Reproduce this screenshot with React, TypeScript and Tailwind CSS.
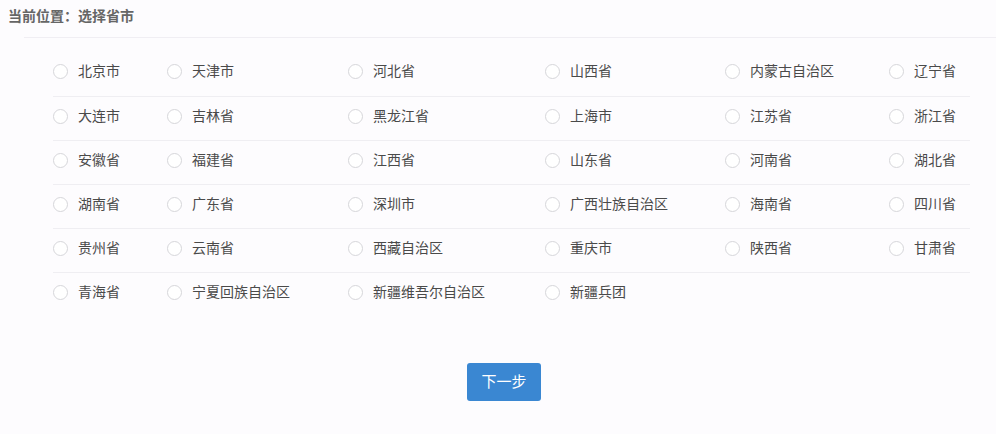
const ROWS: string[][] = [
  ['北京市', '天津市', '河北省', '山西省', '内蒙古自治区', '辽宁省'],
  ['大连市', '吉林省', '黑龙江省', '上海市', '江苏省', '浙江省'],
  ['安徽省', '福建省', '江西省', '山东省', '河南省', '湖北省'],
  ['湖南省', '广东省', '深圳市', '广西壮族自治区', '海南省', '四川省'],
  ['贵州省', '云南省', '西藏自治区', '重庆市', '陕西省', '甘肃省'],
  ['青海省', '宁夏回族自治区', '新疆维吾尔自治区', '新疆兵团'],
];

function Radio({ label }: { label: string }) {
  return (
    <label className="flex h-[20px] cursor-pointer items-center gap-[10px]">
      <span className="h-[15px] w-[15px] shrink-0 rounded-full border border-[#d6d6da] bg-white" />
      <span className="whitespace-nowrap">{label}</span>
    </label>
  );
}

export default function App() {
  return (
    <div
      className="min-h-[434px] w-[996px] bg-[#fdfcfe] text-[14px] text-[#4a4a4a]"
      style={{ fontFamily: '"Liberation Sans", "Noto Sans CJK SC", sans-serif' }}
    >
      {/* Breadcrumb */}
      <div className="px-[8px] pt-[6px] pb-[11px] text-[14px] font-bold leading-[20px] text-[#666]">
        当前位置：选择省市
      </div>
      <div className="ml-[24px] border-t border-[#f0eef3]" />

      {/* Province table */}
      <div className="ml-[53px] mr-[26px] pt-[14px]">
        {ROWS.map((row, i) => (
          <div
            key={i}
            className={`grid h-[44px] grid-cols-[114px_181px_197px_180px_164px_1fr] pt-[9px] ${
              i === 0 ? '' : 'border-t border-[#efeef2]'
            }`}
          >
            {row.map((name) => (
              <Radio key={name} label={name} />
            ))}
          </div>
        ))}
      </div>

      {/* Next */}
      <div className="mt-[47px] flex justify-center pl-[12px]">
        <button className="h-[38px] w-[74px] rounded-[3px] bg-[#3a87d2] text-[15px] text-white">
          下一步
        </button>
      </div>
    </div>
  );
}
